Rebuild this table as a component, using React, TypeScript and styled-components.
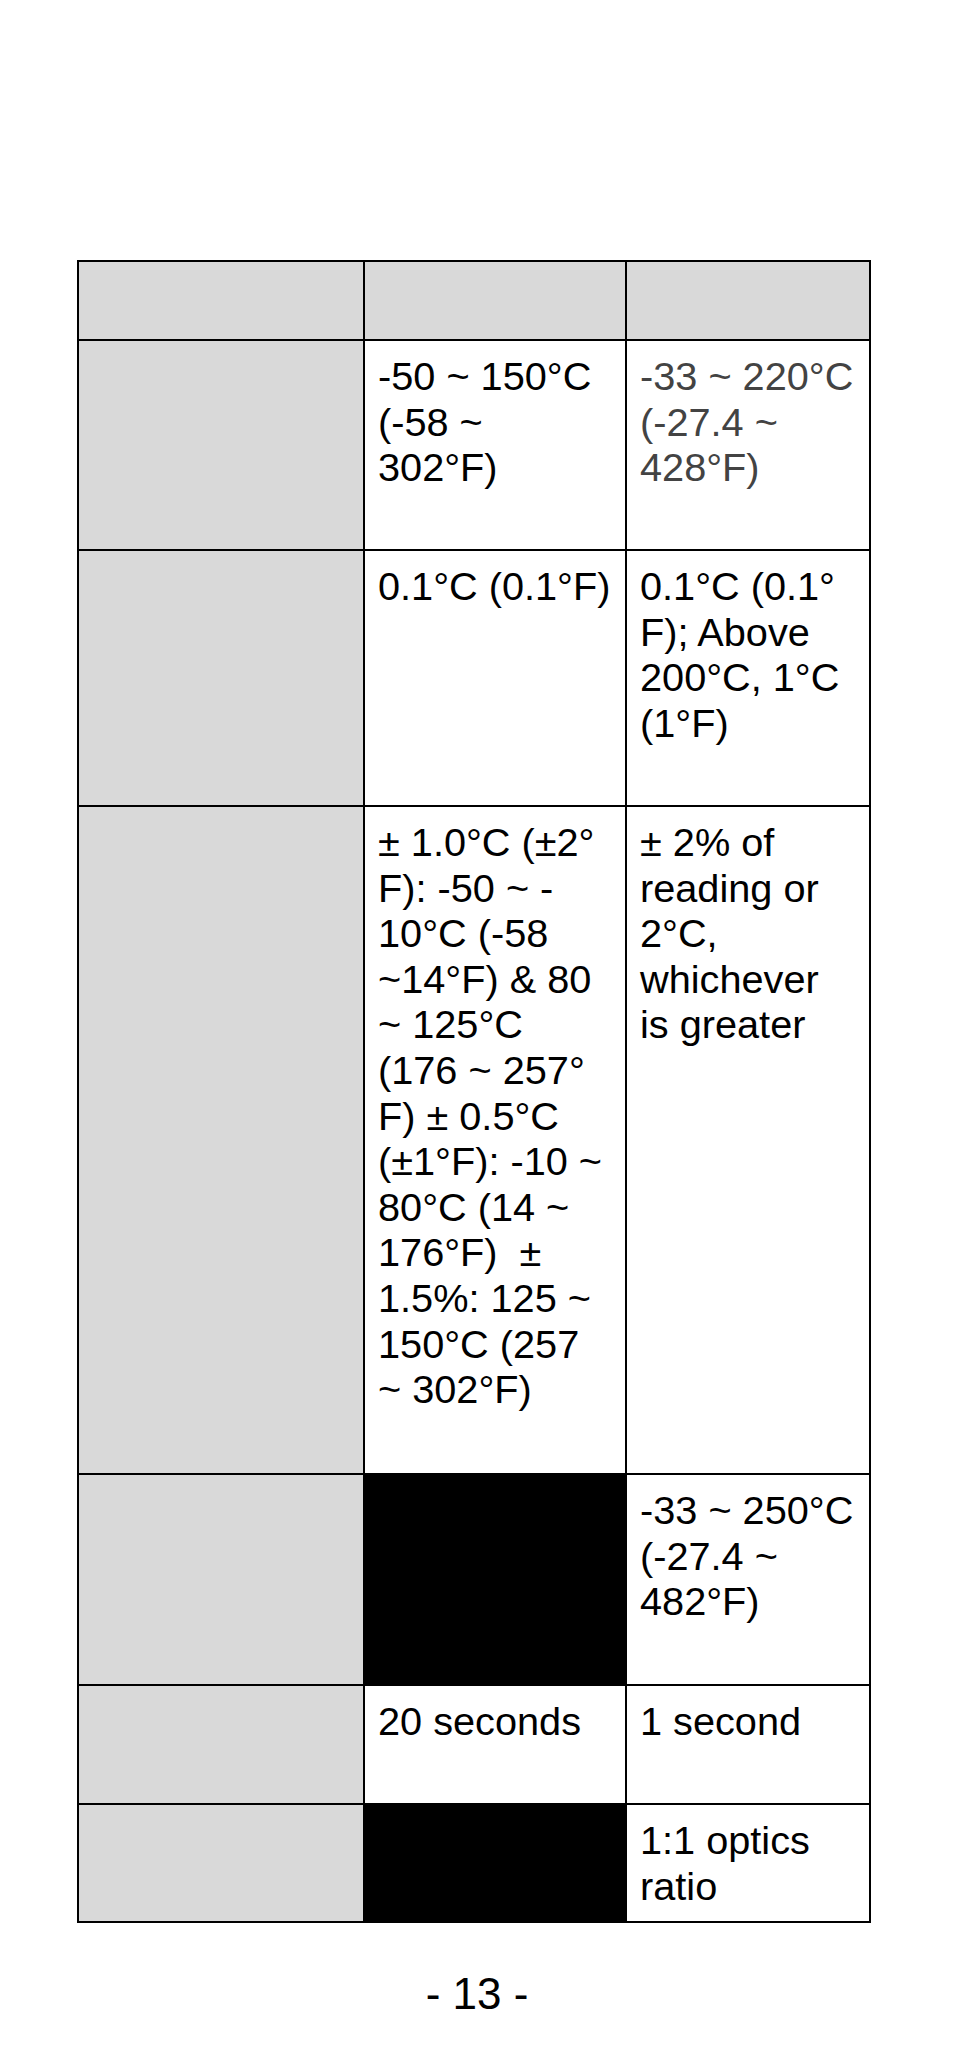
import { Fragment } from "react";
import styled, { createGlobalStyle } from "styled-components";

const GlobalStyle = createGlobalStyle`
    html, body {
        margin: 0;
        padding: 0;
        background: #ffffff;
    }
    body {
        font-family: "Liberation Sans", Arial, sans-serif;
        color: #000000;
    }
`;

const Page = styled.main`
    width: 954px;
    min-height: 2067px;
    padding-top: 260px;
    box-sizing: border-box;
    display: flex;
    flex-direction: column;
`;

const SpecTable = styled.section`
    margin-left: 77px;
    width: 794px;
    box-sizing: border-box;
    display: grid;
    grid-template-columns: 286px 262px 244px;
    grid-template-rows: 79px 210px 256px 668px 211px 119px 118px;
    border-top: 2px solid #000;
    border-left: 2px solid #000;
`;

const Cell = styled.div<{ $tone?: "label" | "value" | "blank"; $muted?: boolean }>`
    box-sizing: border-box;
    border-right: 2px solid #000;
    border-bottom: 2px solid #000;
    padding: 13px 6px 0 13px;
    background: ${props =>
        props.$tone === "label" ? "#d9d9d9" : props.$tone === "blank" ? "#000000" : "#ffffff"};
    color: ${props => (props.$muted ? "#434343" : "#000000")};
    font-size: 39.7px;
    line-height: 45.6px;
    white-space: pre;
    overflow: hidden;
`;

const PageNumber = styled.footer`
    margin-top: 46px;
    text-align: center;
    font-size: 44px;
    line-height: 50px;
    white-space: pre;
`;

type Row = {
    value: string[] | null;
    other: string[];
    muted?: boolean;
};

const rows: Row[] = [
    {
        value: ["-50 ~ 150°C", "(-58 ~", "302°F)"],
        other: ["-33 ~ 220°C", "(-27.4 ~", "428°F)"],
        muted: true,
    },
    {
        value: ["0.1°C (0.1°F)"],
        other: ["0.1°C (0.1°", "F); Above", "200°C, 1°C", "(1°F)"],
    },
    {
        value: [
            "± 1.0°C (±2°",
            "F): -50 ~ -",
            "10°C (-58",
            "~14°F) & 80",
            "~ 125°C",
            "(176 ~ 257°",
            "F) ± 0.5°C",
            "(±1°F): -10 ~",
            "80°C (14 ~",
            "176°F)  ±",
            "1.5%: 125 ~",
            "150°C (257",
            "~ 302°F)",
        ],
        other: ["± 2% of", "reading or", "2°C,", "whichever", "is greater"],
    },
    {
        value: null,
        other: ["-33 ~ 250°C", "(-27.4 ~", "482°F)"],
    },
    {
        value: ["20 seconds"],
        other: ["1 second"],
    },
    {
        value: null,
        other: ["1:1 optics", "ratio"],
    },
];

function Lines({ lines }: { lines: string[] }) {
    return (
        <>
            {lines.map((line, i) => (
                <Fragment key={i}>
                    {line}
                    {i < lines.length - 1 && <br />}
                </Fragment>
            ))}
        </>
    );
}

function App() {
    return (
        <Page>
            <GlobalStyle />
            <SpecTable>
                <Cell $tone="label" />
                <Cell $tone="label" />
                <Cell $tone="label" />
                {rows.map((row, i) => (
                    <Fragment key={i}>
                        <Cell $tone="label" />
                        {row.value ? (
                            <Cell $tone="value">
                                <Lines lines={row.value} />
                            </Cell>
                        ) : (
                            <Cell $tone="blank" />
                        )}
                        <Cell $tone="value" $muted={row.muted}>
                            <Lines lines={row.other} />
                        </Cell>
                    </Fragment>
                ))}
            </SpecTable>
            <PageNumber>- 13 -</PageNumber>
        </Page>
    );
}

export default App;
